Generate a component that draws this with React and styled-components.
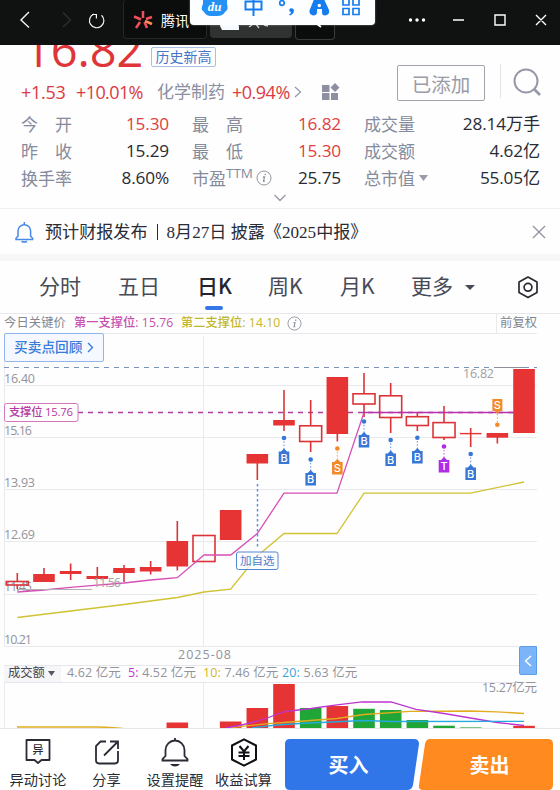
import styled, { createGlobalStyle } from "styled-components";

const font = `"Open Sans", "Noto Sans CJK SC", sans-serif`;
const cjkFont = `"Noto Sans CJK SC", sans-serif`;

const GlobalStyle = createGlobalStyle`
  * {
    box-sizing: border-box;
  }
  body {
    margin: 0;
    background: #fff;
    font-family: ${font};
    overflow: hidden;
  }
  button {
    font-family: inherit;
    margin: 0;
    padding: 0;
    border: 0;
    background: none;
  }
  svg {
    display: block;
    flex: none;
  }
`;

const Page = styled.div`
  position: relative;
  display: flex;
  flex-direction: column;
  width: 560px;
  height: 790px;
  overflow: hidden;
  background: #fefefe;
  white-space: nowrap;
`;

/* ---- window bar ---- */

const WindowBar = styled.header`
  display: flex;
  align-items: flex-start;
  height: 45px;
  flex: none;
  background: #101212;
  color: #fff;
`;

const NavIcons = styled.div`
  display: flex;
  width: 123px;
  height: 40px;
`;

const WindowTab = styled.div`
  display: flex;
  align-items: center;
  gap: 8px;
  width: ${(p) => p.$width}px;
  height: ${(p) => p.$height || 39}px;
  margin-right: 3px;
  padding: 2px 0 0 ${(p) => p.$pad || 0}px;
  border: 1px solid ${(p) => p.$border || "#262628"};
  border-top: 0;
  border-radius: 4px;
  background: ${(p) => p.$bg || "#0b0c0c"};
  font-size: 14px;
  font-family: ${cjkFont};
`;

const WindowControls = styled.div`
  margin-left: auto;
`;

const ImeBar = styled.div`
  position: absolute;
  left: 190px;
  top: 0;
  width: 185px;
  height: 25px;
  background: #fdfeff;
  border-radius: 0 0 4px 4px;
  box-shadow: 0 0 2px rgba(255, 255, 255, 0.5);
`;

/* ---- quote ---- */

const Quote = styled.section`
  display: flex;
  flex-direction: column;
  height: 164px;
  flex: none;
  border-bottom: 1px solid #f0f0f3;
`;

const QuoteTop = styled.div`
  display: flex;
  height: 65px;
  flex: none;
`;

const QuoteMain = styled.div`
  width: 377px;
  padding-left: 21px;
`;

const PriceLine = styled.div`
  display: flex;
  height: 24px;
  overflow: hidden;
`;

const Price = styled.div`
  width: 130px;
  height: 40px;
  margin-top: -15px;
  padding-left: 3px;
  color: #e03538;
  font-size: 47px;
  font-weight: 500;
  letter-spacing: -0.1px;
  line-height: 38px;
`;

const HighBadge = styled.div`
  height: 20px;
  width: 65px;
  margin-top: 2px;
  border: 1px solid #a9bfe5;
  border-radius: 2px;
  color: #4775c5;
  font-family: ${cjkFont};
  font-size: 14px;
  line-height: 17px;
  text-align: center;
`;

const ChangeLine = styled.div`
  display: flex;
  align-items: center;
  height: 40px;
  padding-top: 6px;
  color: #dc3a43;
  font-size: 18px;
`;

const Change = styled.span`
  width: ${(p) => p.$width}px;
  letter-spacing: ${(p) => p.$spacing || "-0.3px"};
`;

const Sector = styled.span`
  width: 75px;
  margin-top: -3px;
  color: #8b8f9f;
  font-family: ${cjkFont};
  font-size: 17px;
`;

const AddedButton = styled.button`
  width: 88px;
  height: 36px;
  margin: 20px 15px 0 20px;
  border: 1px solid #a2a3ab;
  border-radius: 2px;
  color: #9a9ca8;
  font-family: ${cjkFont};
  font-size: 19.5px;
  line-height: 31px;
`;

const SearchBox = styled.div`
  height: 34px;
  margin-top: 19px;
  padding: 4px 0 0 12px;
  border-left: 1px solid #e2e2e7;
`;

const Stats = styled.div`
  display: grid;
  grid-template-columns: 88px 60px 102px 70px 93px 106px;
  grid-template-rows: repeat(3, 27px);
  padding-left: 21px;
`;

const StatLabel = styled.div`
  display: flex;
  align-items: center;
  padding-left: ${(p) => p.$indent || 0}px;
  color: #858b9c;
  font-family: ${cjkFont};
  font-size: 17px;
  line-height: 27px;
`;

const Spread = styled.span`
  display: flex;
  justify-content: space-between;
  width: 51px;
`;

const Sup = styled.span`
  align-self: flex-start;
  margin-top: -4px;
  margin-right: 3px;
  font-family: ${font};
  font-size: 13.5px;
`;

const StatValue = styled.div`
  color: ${(p) => (p.$up ? "#df3e43" : "#292b35")};
  font-size: 17.2px;
  line-height: 27px;
  letter-spacing: -0.15px;
  text-align: right;
`;

const Expand = styled.div`
  display: flex;
  justify-content: center;
  margin-top: 2px;
`;

/* ---- notice ---- */

const Notice = styled.section`
  display: flex;
  align-items: center;
  height: 45px;
  flex: none;
  padding: 0 14px;
  color: #292b35;
  font-family: "Liberation Serif", "Noto Sans CJK SC", serif;
  font-size: 17.1px;
`;

const NoticeText = styled.span`
  flex: 1;
  margin: -2px 0 0 10px;
`;

const NoticeRule = styled.i`
  display: inline-block;
  width: 1px;
  height: 16px;
  margin: 0 9px;
  background: #292b35;
  vertical-align: -2px;
`;

const Divider = styled.div`
  height: 7px;
  flex: none;
  background: #f7f7f8;
`;

/* ---- tabs ---- */

const Tabs = styled.nav`
  display: flex;
  height: 53px;
  flex: none;
  padding-left: 39px;
  border-bottom: 1px solid #e9e9ed;
  font-family: ${cjkFont};
`;

const Tab = styled.div`
  display: flex;
  flex-direction: column;
  width: ${(p) => p.$width}px;
  color: ${(p) => (p.$active ? "#24252f" : "#474a57")};
  font-size: 21px;
  font-weight: ${(p) => (p.$active ? 500 : 400)};
  line-height: 48px;
  height: 52px;

  &::after {
    content: "";
    width: 18px;
    height: 4px;
    margin: -3px 0 0 8px;
    border-radius: 2px;
    background: ${(p) => (p.$active ? "#3577e8" : "transparent")};
  }
`;

const MoreTab = styled.div`
  display: flex;
  align-items: center;
  gap: 12px;
  width: 106px;
  height: 48px;
  color: #474a57;
  font-size: 21px;

  svg {
    margin-top: 5px;
  }
`;

/* ---- chart ---- */

const KeyPrices = styled.div`
  display: flex;
  align-items: center;
  height: 19px;
  flex: none;
  padding-left: 4px;
  color: #83858f;
  font-size: 12.2px;
`;

const KeyPrice = styled.span`
  width: ${(p) => p.$width}px;
  margin-top: -3px;
  color: ${(p) => p.$color};
  font-weight: ${(p) => (p.$color ? 500 : 400)};
  letter-spacing: ${(p) => (p.$color ? "0.08px" : "0.2px")};
`;

const Adjust = styled.span`
  display: flex;
  align-items: center;
  height: 19px;
  margin-left: auto;
  margin-right: 23px;
  padding: 0 0 3px 3px;
  border-left: 1px solid #e9e9ed;
  font-size: 12.3px;
`;

const ChartArea = styled.section`
  position: relative;
  height: 332px;
  flex: none;
`;

const ReviewButton = styled.button`
  position: absolute;
  left: 4px;
  top: 0;
  width: 100px;
  height: 29px;
  display: flex;
  align-items: center;
  gap: 5px;
  padding: 0 0 3px 9px;
  border: 1px solid #91b5ee;
  border-radius: 2px;
  background: #f5f9ff;
  color: #397bdb;
  font-size: 13.7px;
  font-weight: 500;

  svg {
    margin-top: 3px;
  }
`;

const CollapseButton = styled.button`
  position: absolute;
  left: 519px;
  top: 313px;
  z-index: 1;
  display: flex;
  align-items: center;
  justify-content: center;
  width: 18px;
  height: 29px;
  border: 1px solid #5c9eee;
  border-radius: 2px 0 0 2px;
  background: #7cb4fa;
`;

const VolumeLegend = styled.div`
  display: flex;
  align-items: center;
  height: 18px;
  flex: none;
  width: 533px;
  margin-left: 4px;
  padding-bottom: 1px;
  border-top: 1px solid #e6e6ec;
  border-bottom: 1px solid #e6e6ec;
  color: #92949b;
  font-size: 12.5px;
`;

const VolumeSelect = styled.span`
  display: flex;
  align-items: center;
  gap: 3px;
  width: 57px;
  height: 16px;
  margin-right: 6px;
  padding: 0 0 3px 4px;
  background: #f6f6f9;
  color: #444752;
  font-size: 12.3px;

  svg {
    margin-top: 3px;
  }
`;

const VolumeItem = styled.span`
  width: ${(p) => p.$width}px;
  margin-top: -4px;
  letter-spacing: 0.15px;

  b {
    color: ${(p) => p.$color};
    font-weight: 500;
  }
`;

const VolumeSvg = styled.svg`
  overflow: visible;
`;

/* ---- bottom bar ---- */

const BottomBar = styled.footer`
  display: flex;
  height: 62px;
  flex: none;
  border-top: 1px solid #e7e7eb;
  background: #fff;
  z-index: 1;
`;

const Action = styled.div`
  display: flex;
  flex-direction: column;
  align-items: center;
  width: ${(p) => p.$width}px;
  padding-top: 9px;
  color: #292b35;
  font-family: ${cjkFont};
  font-size: 14.2px;
  line-height: 22px;
`;

const ActionIcon = styled.div`
  display: flex;
  height: 31px;
`;

const Trade = styled.div`
  position: relative;
  display: flex;
  margin: 10px 0 0 5px;
`;

const TradeShape = styled.svg`
  position: absolute;
  left: 0;
  top: 0;
`;

const TradeButton = styled.button`
  position: relative;
  width: 134px;
  height: 51px;
  padding-left: ${(p) => p.$shift || 0}px;
  color: #fff;
  font-family: ${cjkFont};
  font-size: 20px;
  font-weight: 700;
  line-height: 46px;
`;

const stats = [
  { label: "今开", value: "15.30", up: true },
  { label: "最高", value: "16.82", up: true },
  { label: "成交量", value: "28.14万手" },
  { label: "昨收", value: "15.29" },
  { label: "最低", value: "15.30", up: true },
  { label: "成交额", value: "4.62亿" },
  { label: "换手率", value: "8.60%" },
  { label: "市盈", value: "25.75", ttm: true },
  { label: "总市值", value: "55.05亿", menu: true },
];

const RED = "#e63334";
const GREEN = "#20a636";
const BLUE = "#3877d7";
const ORANGE = "#f28a28";
const PURPLE = "#ae2be7";
const step = 26.67;
const cx = (i) => 17.3 + i * step;

// [body top, body bottom, wick top, wick bottom, hollow]
const candles = [
  [581.5, 585, 573, 589, true],
  [574, 582, 568, 582],
  [571, 574, 563.5, 580],
  [576, 579, 567, 579],
  [568, 573, 565, 582],
  [567, 571.5, 561, 574.5],
  [541, 566.5, 521, 570.5],
  [535.5, 561.5, 535, 562, true],
  [510, 540, 510, 540],
  [454, 463.5, 454, 480],
  [420, 425.5, 390, 431],
  [425.8, 441.5, 400, 452, true],
  [377, 434, 377, 441.5],
  [393.8, 404, 373, 417, true],
  [395.8, 417.5, 383, 433, true],
  [416.7, 425.5, 412, 431, true],
  [422.6, 437.5, 406, 440, true],
  [432.9, 434.3, 428, 447],
  [433, 437.7, 433, 443.5],
  [369, 433, 369, 433],
];

const markers = [
  { i: 10, dot: 438, y: 449.5, t: "B" },
  { i: 11, dot: 459.5, y: 471, t: "B" },
  { i: 12, dot: 448.5, y: 460, t: "S", color: ORANGE },
  { i: 13, dot: 421.5, y: 433, t: "B" },
  { i: 14, dot: 440, y: 451.5, t: "B" },
  { i: 15, dot: 437.7, y: 449, t: "B" },
  { i: 16, dot: 446.5, y: 458, t: "T", color: PURPLE },
  { i: 17, dot: 454, y: 465.5, t: "B" },
  { i: 18, dot: 424.8, y: 399, t: "S", color: ORANGE, above: true },
];

const volumes = [
  [6, 722.5, RED],
  [8, 721.5, RED],
  [9, 708, RED],
  [10, 684, RED],
  [11, 708, GREEN],
  [12, 706, RED],
  [13, 708.8, GREEN],
  [14, 710, GREEN],
  [15, 720, GREEN],
  [16, 725.7, GREEN],
  [17, 727.4, GREEN],
  [19, 725.8, RED],
];

const priceLabels = [
  ["16.40", 382.7, 31],
  ["15.16", 435, 28],
  ["13.93", 487, 31],
  ["12.69", 539.3, 31],
  ["11.45", 591, 28],
  ["10.21", 644, 28],
];

const InfoIcon = ({ size = 16 }) => (
  <svg width={size} height={size} viewBox="0 0 16 16" fill="none" stroke="#9295a2">
    <circle cx="8" cy="8" r="7" />
    <path d="M9.3 3.8v1.4M7 7h1.5l-1 4.3h1.3" strokeWidth="1.3" />
  </svg>
);

const Caret = ({ w = 9, h = 6, color = "#8b8e9b" }) => (
  <svg width={w} height={h} viewBox="0 0 10 6" preserveAspectRatio="none">
    <path d="M0 0h10L5 6z" fill={color} />
  </svg>
);

const Marker = ({ i, dot, y, t, color = BLUE, above }) => {
  const x = cx(i);
  const shape = above
    ? `M${x - 5} ${y}h10v12h-2.5L${x} ${y + 15}l-2.5 -3H${x - 5}z`
    : `M${x} ${y - 1}l3 3h2.3v12.5h-10.6v-12.5h2.3z`;
  return (
    <g>
      <line
        x1={x}
        x2={x}
        y1={above ? y + 15 : dot}
        y2={above ? dot : y}
        stroke={color}
        strokeDasharray="1.5 1.8"
        opacity=".8"
      />
      <circle cx={x} cy={dot} r="2.3" fill={color} />
      <path d={shape} fill={color} />
      <text
        x={x}
        y={above ? y + 10 : y + 12}
        fill="#fff"
        fontSize="11"
        fontWeight="500"
        fontFamily="Inter, sans-serif"
        textAnchor="middle"
      >
        {t}
      </text>
    </g>
  );
};

const PriceChart = () => (
  <svg width="560" height="332" viewBox="0 333 560 332" fontFamily={font}>
    <g stroke="#e9e9ee">
      {[333.5, 385.5, 437.5, 489.5, 541.5, 594.5, 646.5].map((y) => (
        <line key={y} x1="4" x2="537" y1={y} y2={y} />
      ))}
      <line x1="4.5" x2="4.5" y1="333" y2="647" />
      <line x1="203.5" x2="203.5" y1="336" y2="647" />
    </g>
    <g fill="#92939a" fontSize="12.5">
      {priceLabels.map(([t, y, w]) => (
        <text key={t} x="4" y={y} textLength={w}>
          {t}
        </text>
      ))}
      <text x="178" y="659" textLength="53">
        2025-08
      </text>
      <text x="463" y="378" textLength="31" fill="#a0a1a8">
        16.82
      </text>
    </g>
    <line x1="4" x2="537" y1="367.5" y2="367.5" stroke="#7994ba" strokeDasharray="5 5" />
    <line x1="494" x2="524" y1="367.5" y2="367.5" stroke="#8e9099" />
    <line x1="78" x2="537" y1="412.5" y2="412.5" stroke="#b43b9e" strokeWidth="1.3" strokeDasharray="5 5" />
    {candles.map(([top, bottom, high, low, hollow], i) => (
      <g key={i} stroke="#da3438" strokeWidth="1.6">
        <line x1={cx(i)} x2={cx(i)} y1={high} y2={hollow ? top : low} />
        {hollow && <line x1={cx(i)} x2={cx(i)} y1={bottom} y2={low} />}
        {hollow ? (
          <rect x={cx(i) - 11} y={top} width="22" height={bottom - top} fill="none" />
        ) : (
          <rect x={cx(i) - 10.8} y={top} width="21.6" height={bottom - top} fill={RED} stroke="none" />
        )}
      </g>
    ))}
    <polyline
      fill="none"
      stroke="#d64fb5"
      strokeWidth="1.3"
      points="17.3,592 44,590 70.5,587.3 97,585.2 124,583 150.5,580 177.3,577.7 204,555 230.7,555 257.3,533.5 284,493.2 337,493.2 364,412.5"
    />
    <line x1="363" x2="514" y1="412.5" y2="412.5" stroke="#b832aa" strokeWidth="1.4" />
    <polyline
      fill="none"
      stroke="#d0c332"
      strokeWidth="1.3"
      points="17.3,617.5 70.5,611 124,604.5 177.3,597.5 204,592 230.7,589.2 257.3,556 284,533.5 337,533.5 364,493.2 470.5,493.2 524,482"
    />
    <line x1="17" x2="92" y1="589.5" y2="589.5" stroke="#b3b0b4" />
    <text x="93" y="587" textLength="28" fontSize="12.5" fill="#a0a1a8">
      11.56
    </text>
    <line x1="257.5" x2="257.5" y1="484" y2="548" stroke="#5c8eda" strokeWidth="1.5" strokeDasharray="2.5 2.5" />
    <rect x="236.5" y="552" width="41.5" height="17.5" rx="2" fill="#f9fcff" fillOpacity=".75" stroke="#5486d2" />
    <text x="257.2" y="564.5" fontSize="11.5" fill="#4c80ce" textAnchor="middle">
      加自选
    </text>
    {markers.map((m) => (
      <Marker key={m.i} {...m} />
    ))}
    <rect x="4.5" y="403.5" width="73.5" height="18" rx="2" fill="#fff" stroke="#d477bd" />
    <text x="9" y="416" fontSize="11.3" fontWeight="500" fill="#b438a1" textLength="64">
      支撑位 15.76
    </text>
  </svg>
);

const VolumeChart = () => (
  <VolumeSvg width="560" height="45" viewBox="0 683 560 45" fontFamily={font}>
    <path d="M4.5 683v45M203.5 683v45" stroke="#e9e9ee" />
    {volumes.map(([i, y, color]) => (
      <rect key={i} x={cx(i) - 10.8} y={y} width="21.6" height={728 - y} fill={color} />
    ))}
    <path
      d="M17 727H97Q115 727.3 126 729M230 728C250 725 265 724 284 722.5L337 718.5L364 714.5L410 711.3L470 711L497 711.8L524 713.5"
      fill="none"
      stroke="#e0ad20"
      strokeWidth="1.3"
    />
    <path
      d="M225 728C245 725 262 721 280 713Q286 711 294 710.5L311 708.5L337 704.8L362 701.8L391 702L416 709.3L444 713.5L497 722.5L524 725.5"
      fill="none"
      stroke="#bd35d0"
      strokeWidth="1.3"
    />
    <path
      d="M252 728Q275 724.5 300 723.5L364 720.5L391 721.5L524 721.3"
      fill="none"
      stroke="#26a9dc"
      strokeWidth="1.3"
    />
    <text x="537" y="692" fontSize="12.5" fill="#92939a" textAnchor="end" textLength="55">
      15.27亿元
    </text>
  </VolumeSvg>
);

const InputMethod = () => (
  <ImeBar>
    <svg width="184" height="24" fill="none" stroke="#167df0" strokeWidth="2">
      <path d="M13 0h24v4q2 5-2 8-2 4-8 4h-6q-5 0-7-4-4-3-1-8z" fill="#2492f5" stroke="none" />
      <text
        x="24.5"
        y="11"
        fill="#fff"
        stroke="none"
        fontSize="13"
        fontStyle="italic"
        fontWeight="700"
        fontFamily="Liberation Serif, serif"
        textAnchor="middle"
      >
        du
      </text>
      <path d="M55.500 1.500h16v8h-16zM63.500 -2v18" />
      <circle cx="92" cy="3" r="2.300" strokeWidth="1.700" />
      <path d="M100 8.500q3-1 4 1.500 0 4-4 5.500l-1-1q2-1 2-2.500-3-1-1-3.500z" fill="#167df0" stroke="none" />
      <path
        d="M125-3h8l6 13q1 5-4 5.500-3 0-3-3.500v-3h-5v3q0 3.500-4 3.500-4-1-3.500-5z"
        fill="#167df0"
        stroke="none"
      />
      <circle cx="129.300" cy="5.500" r="1.700" fill="#fff" stroke="none" />
      <path d="M153-2h6v7h-6zM163-2h6v7h-6zM153 8.500h6v6h-6zM163 8.500h6v6h-6z" strokeWidth="1.700" />
    </svg>
  </ImeBar>
);

const App = () => (
  <>
    <GlobalStyle />
    <Page>
      <WindowBar>
        <NavIcons>
          <svg width="123" height="40" fill="none" stroke="#f4f4f4" strokeWidth="1.4">
            <path d="M29 12l-8 8 8 7.5" />
            <path d="M63 12.5l7.5 7.5-7.5 7" stroke="#2c2e2f" />
            <path d="M101.5 15.2a7.2 7.2 0 1 1-7.8-1.2M92 14.5h4.4v4" strokeWidth="1.2" />
          </svg>
        </NavIcons>
        <WindowTab $width={84} $pad={9}>
          <svg width="20" height="20" stroke="#f04f5c" strokeWidth="2.5">
            <path d="M10 1v7M1 6.5l7 3M7 12l-4 6M11.5 12l2.5 6M13 9l6-2" />
            <path d="M12 11l7 3" stroke="#fa8c52" />
          </svg>
          腾讯
        </WindowTab>
        <WindowTab $width={82} $height={38} $pad={9} $bg="#303131" $border="#303131">
          <svg width="60" height="36">
            <path d="M0 24q1-8 7-4l4-4 3 5q4-3 5 4v3H2z" fill="#f7fbff" />
            <path d="M29 25l3-2m4-1l3 4m5-3l4 1" stroke="#ccc" strokeWidth="1.4" />
          </svg>
        </WindowTab>
        <WindowTab $width={40} $height={40} $pad={19} $border="#3a3b3c">
          <svg width="14" height="16">
            <path d="M2 11l4 3" stroke="#fff" strokeWidth="1.6" />
          </svg>
        </WindowTab>
        <WindowControls>
          <svg width="153" height="40" fill="none" stroke="#fff" strokeWidth="1.4">
            <g fill="#fff" stroke="none">
              <circle cx="3.5" cy="20" r="1.7" />
              <circle cx="10" cy="20" r="1.7" />
              <circle cx="16.5" cy="20" r="1.7" />
            </g>
            <path d="M46 20h11M88 15h10v10H88zM129 15l10 10M139 15l-10 10" />
          </svg>
        </WindowControls>
      </WindowBar>
      <InputMethod />

      <Quote>
        <QuoteTop>
          <QuoteMain>
            <PriceLine>
              <Price>16.82</Price>
              <HighBadge>历史新高</HighBadge>
            </PriceLine>
            <ChangeLine>
              <Change $width={55}>+1.53</Change>
              <Change $width={81} $spacing="-0.6px">
                +10.01%
              </Change>
              <Sector>化学制药</Sector>
              <Change $width={62} $spacing="-0.5px">
                +0.94%
              </Change>
              <svg width="28" height="20" viewBox="0 0 28 20">
                <path d="M1 5l5.500 5L1 15" fill="none" stroke="#9799a8" strokeWidth="1.3" />
              </svg>
              <svg width="18" height="18" viewBox="0 0 18 18" fill="#8e90a2">
                <path d="M0 2h7.500v7H0zM0 10h7.500v7H0zM9 10h7v7H9zM13 0l4.500 4.500L13 9 8.500 4.500z" />
              </svg>
            </ChangeLine>
          </QuoteMain>
          <AddedButton>已添加</AddedButton>
          <SearchBox>
            <svg width="30" height="28" fill="none" stroke="#9698a8" strokeWidth="2">
              <circle cx="13" cy="13" r="11.500" />
              <path d="M21 21l6 6" strokeWidth="2.6" />
            </svg>
          </SearchBox>
        </QuoteTop>
        <Stats>
          {stats.map((s, i) => [
            <StatLabel key={s.label} $indent={[0, 23, 23][i % 3]}>
              {s.label.length === 2 && !s.ttm ? (
                <Spread>
                  <span>{s.label[0]}</span>
                  <span>{s.label[1]}</span>
                </Spread>
              ) : (
                s.label
              )}
              {s.ttm && (
                <>
                  <Sup>TTM</Sup>
                  <InfoIcon />
                </>
              )}
              {s.menu && (
                <svg width="13" height="6">
                  <path d="M4 0h9L8.500 6z" fill="#999ba6" />
                </svg>
              )}
            </StatLabel>,
            <StatValue key={s.label + "v"} $up={s.up}>
              {s.value}
            </StatValue>,
          ])}
        </Stats>
        <Expand>
          <svg width="14" height="9" fill="none" stroke="#9699a5" strokeWidth="1.3">
            <path d="M1.500 2l5.500 5.500L12.500 2" />
          </svg>
        </Expand>
      </Quote>

      <Notice>
        <svg width="21" height="22" fill="none" stroke="#4689e6" strokeWidth="1.5">
          <path d="M2 18.500v-1.200l2-2V10a6.300 6.300 0 0 1 12.600 0v5.300l2 2v1.200zM10.300 1v2.500M7.500 20.500q2.800 1 5.600 0" />
        </svg>
        <NoticeText>
          预计财报发布
          <NoticeRule />
          8月27日 披露《2025中报》
        </NoticeText>
        <svg width="14" height="14" stroke="#9193a2" strokeWidth="1.3">
          <path d="M1 1l12 12M13 1L1 13" />
        </svg>
      </Notice>
      <Divider />

      <Tabs>
        <Tab $width={79}>分时</Tab>
        <Tab $width={79}>五日</Tab>
        <Tab $width={71} $active>
          日K
        </Tab>
        <Tab $width={72}>周K</Tab>
        <Tab $width={71}>月K</Tab>
        <MoreTab>
          更多
          <Caret w={10} h={5} color="#474a57" />
        </MoreTab>
        <svg width="22" height="50" fill="none" stroke="#292b32" strokeWidth="1.7">
          <path d="M11 16l9 5v10.500l-9 5-9-5V21z" strokeLinejoin="round" />
          <circle cx="11" cy="26.300" r="3.900" />
        </svg>
      </Tabs>

      <KeyPrices>
        <KeyPrice $width={70}>今日关键价</KeyPrice>
        <KeyPrice $width={107} $color="#c74fae">
          第一支撑位: 15.76
        </KeyPrice>
        <KeyPrice $width={106} $color="#c2b62b">
          第二支撑位: 14.10
        </KeyPrice>
        <InfoIcon size={15} />
        <Adjust>前复权</Adjust>
      </KeyPrices>

      <ChartArea>
        <PriceChart />
        <ReviewButton>
          买卖点回顾
          <svg width="7" height="11" fill="none" stroke="#397bdb" strokeWidth="1.4">
            <path d="M1 1l4.500 4.500L1 10" />
          </svg>
        </ReviewButton>
        <CollapseButton>
          <svg width="8" height="12" fill="none" stroke="#fff" strokeWidth="1.4">
            <path d="M7 1L1.500 6 7 11" />
          </svg>
        </CollapseButton>
      </ChartArea>

      <VolumeLegend>
        <VolumeSelect>
          成交额
          <Caret w={7} h={5} color="#555864" />
        </VolumeSelect>
        <VolumeItem $width={61}>4.62 亿元</VolumeItem>
        <VolumeItem $width={75} $color="#c334d6">
          <b>5:</b> 4.52 亿元
        </VolumeItem>
        <VolumeItem $width={79} $color="#d2b82b">
          <b>10:</b> 7.46 亿元
        </VolumeItem>
        <VolumeItem $width={80} $color="#35a7dc">
          <b>20:</b> 5.63 亿元
        </VolumeItem>
      </VolumeLegend>
      <VolumeChart />

      <BottomBar>
        <Action $width={76}>
          <ActionIcon>
            <svg width="26" height="28" fill="none" stroke="#292b35" strokeWidth="1.8">
              <path d="M1.500 2h23v20h-8L13 25l-3.500-3h-8z" strokeLinejoin="round" />
              <text x="13" y="16" fontSize="11" fontWeight="500" textAnchor="middle" fill="#292b35" stroke="none">
                异
              </text>
            </svg>
          </ActionIcon>
          异动讨论
        </Action>
        <Action $width={61}>
          <ActionIcon>
            <svg width="26" height="28" fill="none" stroke="#292b35" strokeWidth="1.8">
              <path d="M12 3.500H6.500L2 8v14.500a3 3 0 0 0 3 3h16a3 3 0 0 0 3-3V13M10 17.500L23.500 4M16 3.500h8V11" />
            </svg>
          </ActionIcon>
          分享
        </Action>
        <Action $width={76}>
          <ActionIcon>
            <svg width="28" height="29" fill="none" stroke="#292b35" strokeWidth="1.8">
              <path d="M1.500 22.500v-1.300l3-3.200v-6a9.500 9.500 0 0 1 19 0v6l3 3.200v1.300zM14 0v3" />
              <path d="M9 26h10q-2 2.500-5 2.500T9 26z" fill="#292b35" stroke="none" />
            </svg>
          </ActionIcon>
          设置提醒
        </Action>
        <Action $width={61}>
          <ActionIcon>
            <svg width="28" height="30" viewBox="0 0 28 30" fill="none" stroke="#101116" strokeWidth="2">
              <path d="M14 1.300l12 6.200v14l-12 6.200-12-6.200v-14z" strokeLinejoin="round" />
              <path d="M9.500 8l4.500 5.500L18.500 8M14 13v9M8.500 14.500h11M8.500 18h11" />
            </svg>
          </ActionIcon>
          收益试算
        </Action>
        <Trade>
          <TradeShape width="275" height="52">
            <path d="M11 0h124q5 0 5 5l-6 41q-1 5-6 5H11q-5 0-5-5V5q0-5 5-5z" fill="#3076e9" />
            <path d="M151 0h118q5 0 5 5v41q0 5-5 5H144q-5 0-4-5l6-41q1-5 5-5z" fill="#ff8b20" />
          </TradeShape>
          <TradeButton $shift={5}>买入</TradeButton>
          <TradeButton $shift={19}>卖出</TradeButton>
        </Trade>
      </BottomBar>
    </Page>
  </>
);

export default App;
